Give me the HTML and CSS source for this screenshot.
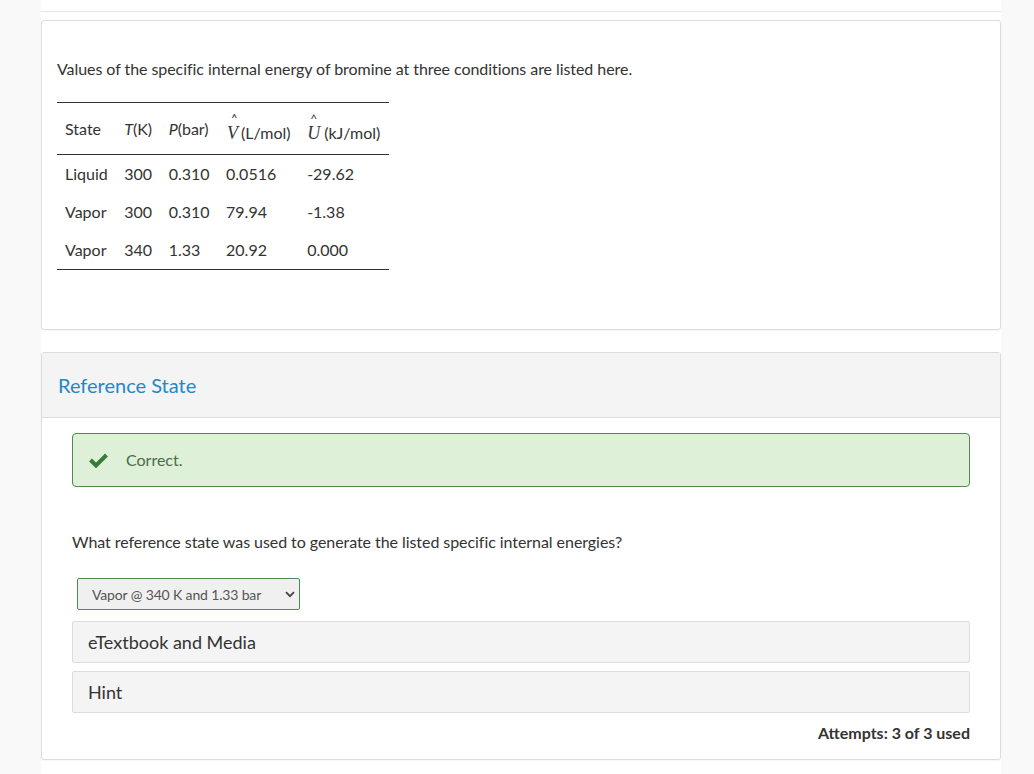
FILE: index.html
```html
<!DOCTYPE html>
<html>
<head>
<meta charset="utf-8">
<link rel="stylesheet" href="styles.css">
</head>
<body>
<div class="page">
  <div class="prev"></div>
  <div class="card intro">
    <p class="lead">Values of the specific internal energy of bromine at three conditions are listed here.</p>
    <table class="data">
      <thead>
        <tr>
          <th>State</th>
          <th><i>T</i>(K)</th>
          <th><i>P</i>(bar)</th>
          <th><span class="hat hv"><span class="cap">^</span><i>V</i></span>(L/mol)</th>
          <th><span class="hat hu"><span class="cap">^</span><i>U</i></span> (kJ/mol)</th>
        </tr>
      </thead>
      <tbody>
        <tr><td>Liquid</td><td>300</td><td>0.310</td><td>0.0516</td><td>-29.62</td></tr>
        <tr><td>Vapor</td><td>300</td><td>0.310</td><td>79.94</td><td>-1.38</td></tr>
        <tr><td>Vapor</td><td>340</td><td>1.33</td><td>20.92</td><td>0.000</td></tr>
      </tbody>
    </table>
  </div>

  <div class="card part">
    <div class="part-head">Reference State</div>
    <div class="part-body">
      <div class="alert">
        <svg class="check" width="19" height="15" viewBox="0 0 19 15"><path d="M1.5 7 L7 12.5 L17.5 2" fill="none" stroke="#3b7a3b" stroke-width="4" stroke-linecap="butt" stroke-linejoin="miter"/></svg>
        <span>Correct.</span>
      </div>
      <p class="question">What reference state was used to generate the listed specific internal energies?</p>
      <div class="select-wrap">
        <select class="answer">
          <option>Vapor @ 340 K and 1.33 bar</option>
        </select>
        <svg class="chev" width="10" height="7" viewBox="0 0 10 7"><path d="M1 1.2 L5 5.2 L9 1.2" fill="none" stroke="#444" stroke-width="1.8"/></svg>
      </div>
      <div class="panel">eTextbook and Media</div>
      <div class="panel">Hint</div>
      <div class="attempts">Attempts: 3 of 3 used</div>
    </div>
  </div>
</div>
</body>
</html>
```

FILE: styles.css
```css
html, body {
  margin: 0;
  padding: 0;
}
body {
  background: #f9f9f9;
  font-family: Lato, "Open Sans", sans-serif;
  color: #333;
}
.page {
  width: 960px;
  margin-left: 41px;
  background: #fff;
  min-height: 774px;
}
.prev {
  height: 11px;
  border-bottom: 1px solid #e6e6e6;
}
.card {
  border: 1px solid #dcdcdc;
  border-radius: 3px;
  background: #fff;
  box-shadow: 0 1px 2px rgba(0,0,0,0.04);
}
.intro {
  margin-top: 8px;
  padding: 38px 15px 59px 15px;
}
.lead {
  margin: 0 0 23px 0;
  font-size: 16px;
  line-height: 20px;
  letter-spacing: -0.06px;
}
.data {
  border-collapse: collapse;
  border-top: 1px solid #333;
  border-bottom: 1px solid #333;
  font-size: 16px;
}
.data th {
  font-weight: normal;
  text-align: left;
  padding: 0 8.5px 0 8px;
  height: 51px;
  vertical-align: middle;
  border-bottom: 1px solid #333;
  white-space: nowrap;
}
.data td {
  padding: 0 8.5px 2px 8px;
  height: 36px;
  vertical-align: middle;
  white-space: nowrap;
}
.hat {
  position: relative;
  display: inline-block;
  padding-top: 10px;
}
.hv {
  margin-left: 1px;
  margin-right: 3px;
}
.hat .cap {
  position: absolute;
  left: 0;
  right: 0;
  top: -1px;
  text-align: center;
  font-size: 12px;
  line-height: 14px;
}
.hv .cap {
  font-style: italic;
  left: 3px;
}
.hat i {
  font-family: "Liberation Serif", serif;
  font-size: 18px;
}
.part {
  margin-top: 22px;
}
.part-head {
  height: 64px;
  display: flex;
  align-items: center;
  padding: 0 16px;
  background: #f4f4f4;
  border-bottom: 1px solid #dcdcdc;
  color: #2288c8;
  font-size: 20px;
}
.part-body {
  padding: 15px 30px 16px 30px;
}
.alert {
  display: flex;
  align-items: center;
  gap: 18px;
  padding: 16px;
  background: #dff0d8;
  border: 1px solid #4f8a4f;
  border-radius: 4px;
  color: #4a6b4a;
  font-size: 16px;
  line-height: 20px;
}
.question {
  margin: 45px 0 26px 0;
  font-size: 16px;
  line-height: 20px;
  letter-spacing: -0.06px;
}
.select-wrap {
  position: relative;
  display: inline-block;
  margin-left: 5px;
}
.answer {
  appearance: none;
  -webkit-appearance: none;
  width: 223px;
  height: 32px;
  padding: 0 0 0 14px;
  border: 1px solid #4f8a4f;
  border-radius: 2px;
  background: #f0f0f0;
  color: #555;
  font-family: Lato, sans-serif;
  font-size: 14px;
  letter-spacing: -0.15px;
  display: block;
}
.chev {
  position: absolute;
  right: 5px;
  top: 13px;
}
.panel {
  margin-top: 11px;
  height: 40px;
  display: flex;
  align-items: center;
  padding: 0 16px 0 15px;
  background: #f4f4f4;
  border: 1px solid #dcdcdc;
  border-radius: 2px;
  font-size: 18px;
  color: #333;
}
.panel + .panel {
  margin-top: 8px;
}
.attempts {
  margin-top: 10px;
  text-align: right;
  font-size: 16px;
  line-height: 20px;
  font-weight: bold;
  color: #333;
}
```
